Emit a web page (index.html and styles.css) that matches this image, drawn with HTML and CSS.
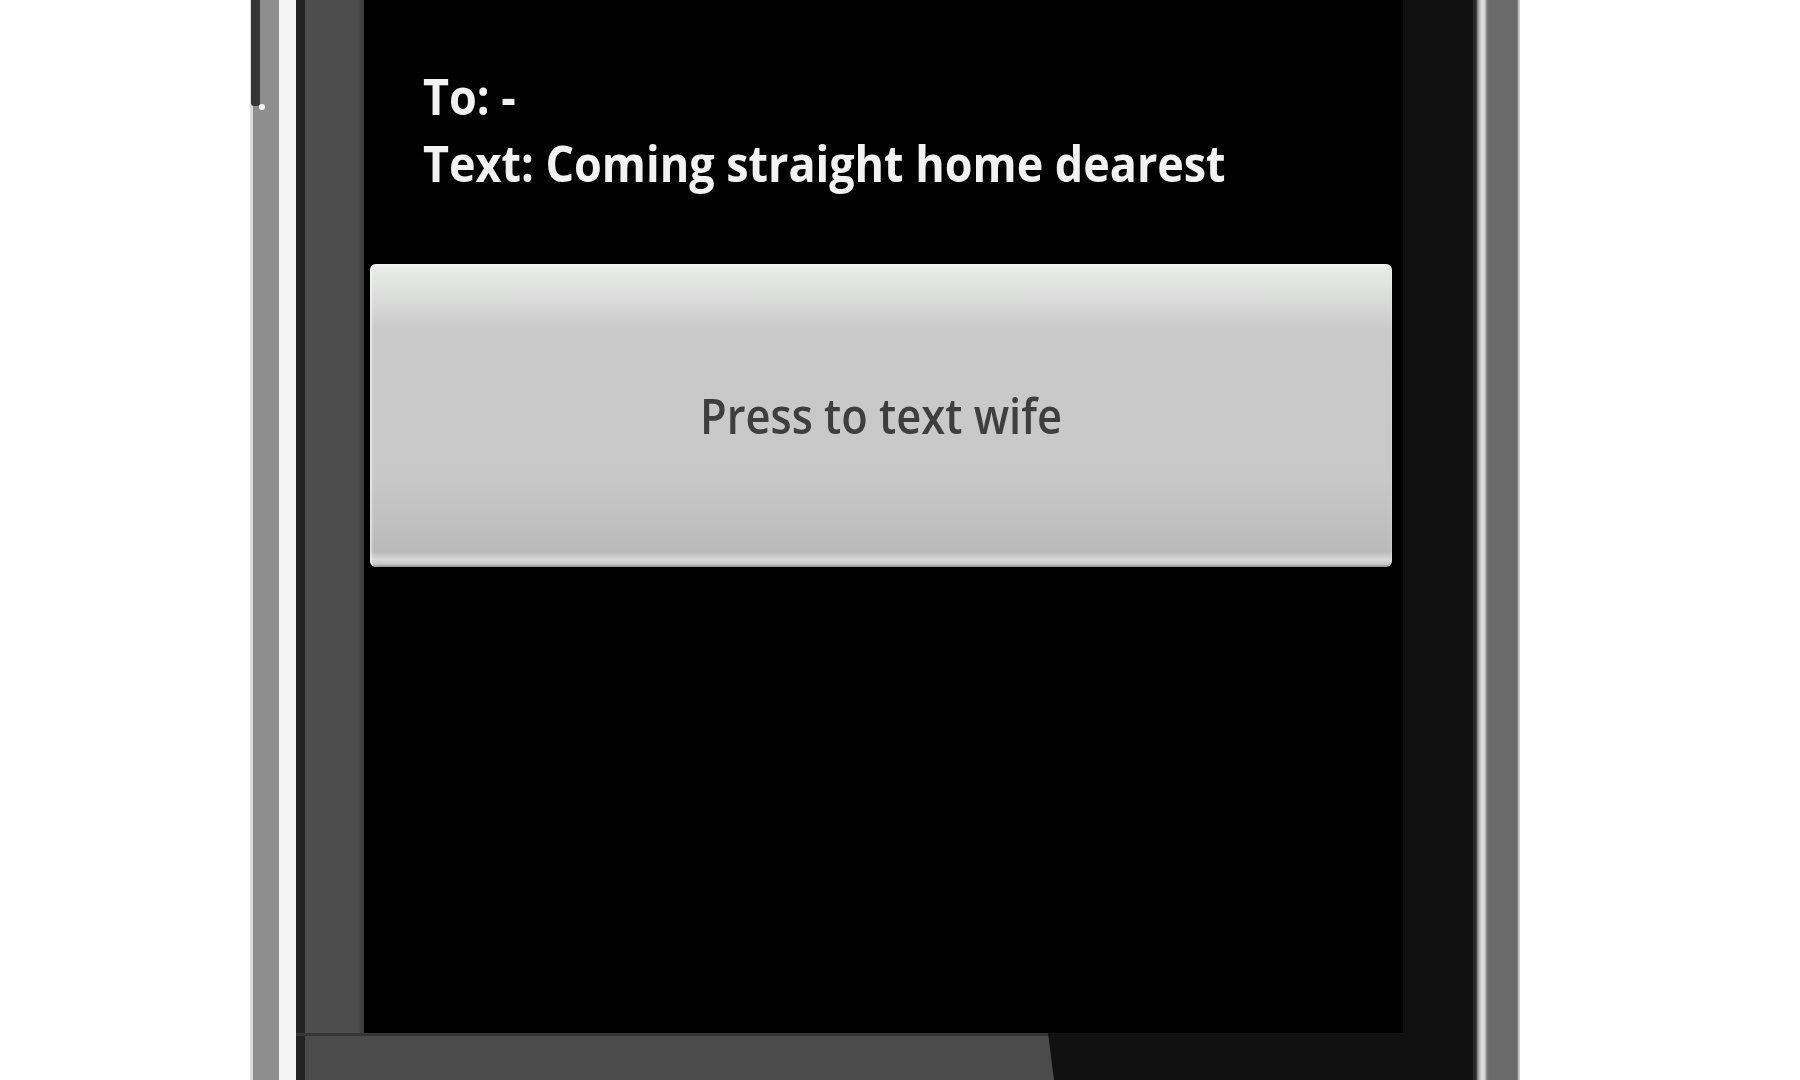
FILE: index.html
```html
<!DOCTYPE html>
<html lang="en">
<head>
  <meta charset="UTF-8">
  <meta name="viewport" content="width=device-width, initial-scale=1.0">
  <title>Text Wife</title>
  <link rel="stylesheet" href="styles.css">
</head>
<body>
  <div class="device">
    <div class="side-key"></div>
    <div class="side-dot"></div>

    <div class="rail-left"></div>

    <div class="frame">
      <div class="frame-top">
        <div class="bezel-left"></div>
        <div class="screen">
          <div class="info">
            <p class="line"><span>To: -</span></p>
            <p class="line"><span>Text: Coming straight home dearest</span></p>
          </div>
          <button class="send"><span>Press to text wife</span></button>
        </div>
        <div class="bezel-right"></div>
      </div>
      <div class="chin">
        <div class="chin-left"></div>
      </div>
    </div>

    <div class="rail-right"></div>
  </div>
</body>
</html>
```

FILE: styles.css
```css
body { margin: 0; background: #fff; overflow: hidden; font-family: "Open Sans", "DejaVu Sans", sans-serif; }

/* phone body */
.device { position: relative; display: flex; width: 1270px; height: 1080px; margin-left: 250px; }
.side-key { position: absolute; left: 1px; top: 0; width: 9px; height: 106px; background: #363636; border-radius: 0 0 3px 3px; }
.side-dot { position: absolute; left: 9px; top: 104px; width: 6px; height: 6px; border-radius: 50%; background: #f4f4f4; }

.rail-left { width: 46px; background: linear-gradient(to right, #dcdcdc 0 3px, #8e8e8e 3px 29px, #f3f3f3 29px 46px); }
.rail-right { width: 47px; background: linear-gradient(to right, #2a2a2a 0 3px, #9a9a9a 5px, #e4e4e4 9px, #d0d0d0 12px, #7a7a7a 14px, #6b6b6b 16px 44px, #cfcfcf 46px); }

.frame { flex: 1; display: flex; flex-direction: column; background: #111; }
.frame-top { display: flex; height: 1033px; }
.bezel-left { width: 68px; background: linear-gradient(to right, #232323 0 9px, #4d4d4d 9px 62px, #3e3e3e 66px); }
.bezel-right { flex: 1; background: #111; }

.chin { flex: 1; display: flex; }
.chin-left { width: 758px; background: linear-gradient(to right, #232323 0 9px, #4b4b4b 9px); border-top: 3px solid #363636; clip-path: polygon(0 0, 752px 0, 100% 100%, 0 100%); }

/* screen */
.screen { width: 1039px; background: #000; display: flex; flex-direction: column; }
.info { padding: 63px 0 0 59px; }
.line { margin: 0; height: 67px; line-height: 67px; font-size: 50px; font-weight: 700; color: #f2f2f2; white-space: nowrap; }
.line span { display: inline-block; transform: scaleX(0.898); transform-origin: 0 50%; filter: blur(0.5px); }

.send {
  margin: 67px 11px 0 6px; height: 303px; padding: 0;
  border: none; border-radius: 6px;
  font-family: inherit; font-size: 48px; font-weight: 600; color: #3e3e3e;
  background: linear-gradient(to bottom, #f2f4f2 0, #e6e9e6 6px, #e1e3e1 22px, #d2d2d2 50px, #cacaca 65px, #c8c8c8 70%, #c3c3c3 80%, #bababa 95%, #d8d8d8 97.5%, #c9c9c9 99%, #8c8c8c 100%);
  box-shadow: inset 3px 0 2px -1px rgba(255,255,255,0.55), inset -2px 0 2px -1px rgba(255,255,255,0.3);
}
.send span { display: inline-block; transform: scaleX(0.905); filter: blur(0.6px); }
```
